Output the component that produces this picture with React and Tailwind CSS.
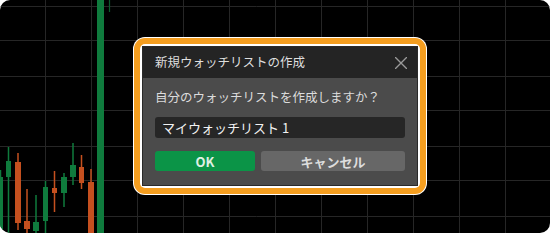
import React from "react";

const GREEN = "#0f7b3d";
const ORANGE = "#c5501f";

// candles: x, width, wickTop, wickBottom, bodyTop, bodyBottom, up
const candles = [
  { x: -2, w: 5, wt: 170, wb: 240, bt: 177, bb: 240, up: true },
  { x: 6, w: 5, wt: 147, wb: 240, bt: 161, bb: 177, up: true },
  { x: 15, w: 6, wt: 153, wb: 230, bt: 162, bb: 223, up: false },
  { x: 24, w: 6, wt: 189, wb: 240, bt: 221, bb: 229, up: false },
  { x: 33, w: 6, wt: 195, wb: 240, bt: 222, bb: 231, up: true },
  { x: 43, w: 5, wt: 181, wb: 240, bt: 187, bb: 221, up: true },
  { x: 52, w: 5, wt: 171, wb: 212, bt: 188, bb: 193, up: false },
  { x: 61, w: 6, wt: 173, wb: 207, bt: 177, bb: 193, up: true },
  { x: 70, w: 6, wt: 143, wb: 185, bt: 165, bb: 177, up: true },
  { x: 79, w: 5, wt: 155, wb: 189, bt: 167, bb: 183, up: false },
  { x: 88, w: 6, wt: 169, wb: 240, bt: 182, bb: 240, up: false },
];

const vLines = [45, 91, 137, 183, 229, 275, 321, 367, 413, 459, 505];
const hLines = [6, 40, 76, 110, 146, 180, 216];

function Chart() {
  return (
    <svg className="absolute inset-0" width="550" height="233" viewBox="0 0 550 233">
      {vLines.map((x) => (
        <line key={"v" + x} x1={x + 0.5} y1="0" x2={x + 0.5} y2="233" stroke="#262626" strokeWidth="1" />
      ))}
      {hLines.map((y) => (
        <line key={"h" + y} x1="0" y1={y + 0.5} x2="550" y2={y + 0.5} stroke="#262626" strokeWidth="1" />
      ))}
      {candles.map((c, i) => {
        const color = c.up ? GREEN : ORANGE;
        const cx = c.x + c.w / 2;
        return (
          <g key={i}>
            <line x1={cx} y1={c.wt} x2={cx} y2={c.wb} stroke={color} strokeWidth="1.5" />
            <rect x={c.x} y={c.bt} width={c.w} height={c.bb - c.bt} fill={color} />
          </g>
        );
      })}
      <rect x="97" y="0" width="7" height="233" fill={GREEN} />
      <line x1="109.5" y1="0" x2="109.5" y2="12" stroke="#0c5a2e" strokeWidth="1.2" />
    </svg>
  );
}

function CloseIcon() {
  return (
    <svg width="12" height="12" viewBox="0 0 12 12" className="block">
      <path d="M0.5 0.5 L11.5 11.5 M11.5 0.5 L0.5 11.5" stroke="#9a9a9a" strokeWidth="1.4" strokeLinecap="round" />
    </svg>
  );
}

export default function App() {
  const font = { fontFamily: '"Noto Sans CJK JP", "Noto Sans", sans-serif' };
  return (
    <div className="w-[550px] h-[233px] bg-white" style={font}>
      <div className="relative w-[550px] h-[233px] rounded-[10px] bg-black overflow-hidden">
        <Chart />
        <div className="relative flex pl-[133px] pt-[37px]">
          <div className="rounded-[12px] bg-white p-[1px]">
            <div className="rounded-[11px] bg-[#f59e1f] p-[6px]">
              <div className="rounded-[5px] bg-white p-[2px]">
                <div className="w-[276px] h-[140px] border border-[#2a2a2a] bg-[#4b4b4b] flex flex-col">
                  <div className="h-[31px] bg-[#242424] flex items-center justify-between pl-[12px] pr-[10px]">
                    <span className="text-[12.5px] text-[#dedede] leading-none">新規ウォッチリストの作成</span>
                    <CloseIcon />
                  </div>
                  <div className="flex flex-col px-[12px] pt-[9px]">
                    <div className="h-[20px] flex items-center text-[12.5px] text-[#dcdcdc] leading-none">
                      自分のウォッチリストを作成しますか？
                    </div>
                    <div className="mt-[10px] h-[21px] rounded-[3px] bg-[#262626] flex items-center px-[7px] text-[13px] text-[#f2f2f2] leading-none">
                      マイウォッチリスト 1
                    </div>
                    <div className="mt-[13px] flex gap-[6px]">
                      <div className="w-[100px] h-[20px] rounded-[3px] bg-[#0b9447] flex items-center justify-center text-[13px] font-bold text-[#dff0e4] leading-none">
                        OK
                      </div>
                      <div className="flex-1 h-[20px] rounded-[3px] bg-[#676767] flex items-center justify-center text-[13px] font-semibold text-[#dddddd] leading-none">
                        キャンセル
                      </div>
                    </div>
                  </div>
                </div>
              </div>
            </div>
          </div>
        </div>
      </div>
    </div>
  );
}
